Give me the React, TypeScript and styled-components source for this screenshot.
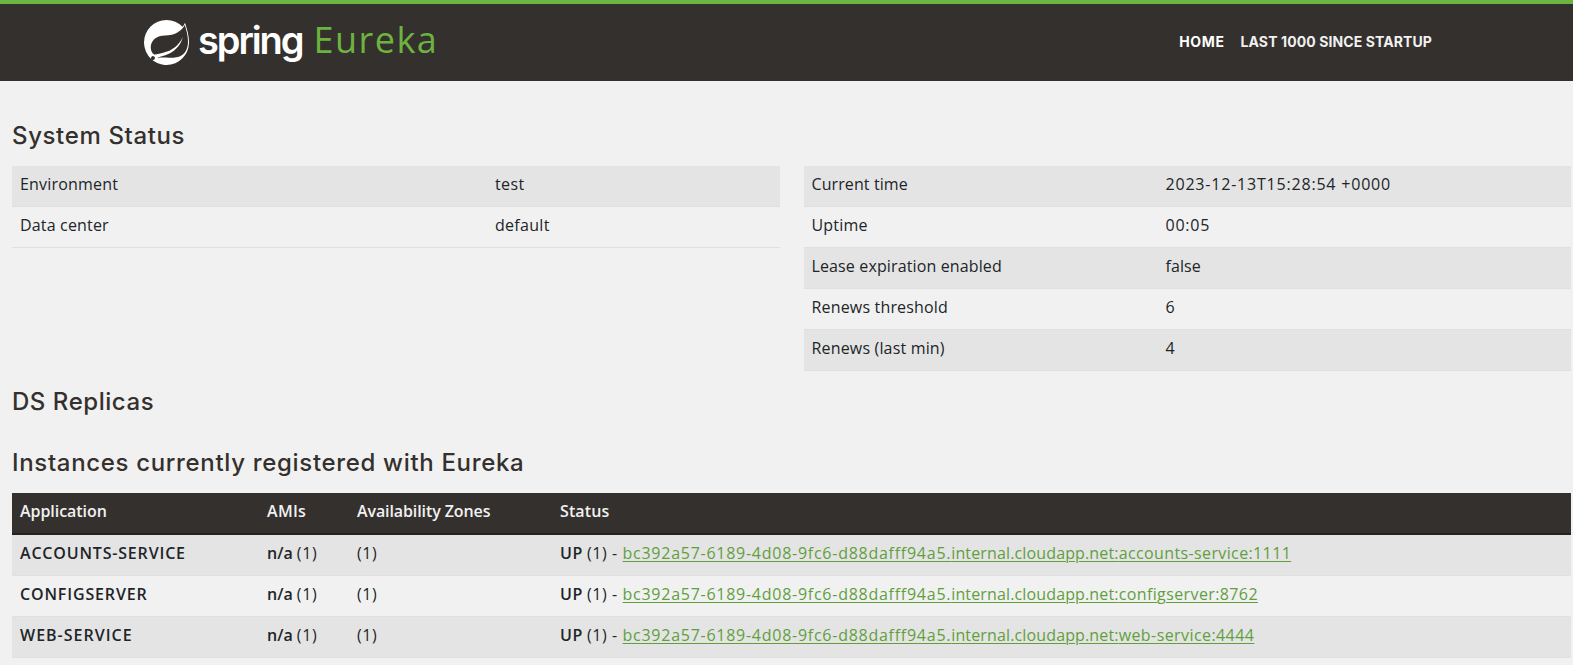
import React from "react";
import styled, { createGlobalStyle } from "styled-components";
import { SiSpring } from "react-icons/si";

const GlobalStyle = createGlobalStyle`
  *, *::before, *::after { box-sizing: border-box; }
  body {
    margin: 0;
    background: #f1f1f1;
    color: #212529;
    font-family: "Open Sans", "Noto Sans", sans-serif;
    font-size: 16px;
    line-height: 24px;
    overflow: hidden;
  }
`;

const Header = styled.header`
  display: flex;
  justify-content: space-between;
  align-items: center;
  height: 81px;
  padding: 0 141px 0 144px;
  border-top: 4px solid #6db33f;
  background: #34302d;
`;

const Brand = styled.a`
  display: flex;
  align-items: center;
  height: 100%;
  color: #fff;
`;

const SpringName = styled.span`
  margin-left: 9px;
  padding-bottom: 6px;
  font: 600 38px/48px Inter, sans-serif;
  letter-spacing: -2.1px;
`;

const ProductName = styled.span`
  margin-left: 11px;
  padding-bottom: 5px;
  color: #6db33f;
  font-size: 36px;
  line-height: 48px;
  letter-spacing: 1.5px;
`;

const Nav = styled.nav`
  display: flex;
  gap: 16px;
  padding-bottom: 2px;
`;

const NavLink = styled.a<{ $active?: boolean; $track: number }>`
  color: ${(p) => (p.$active ? "#fff" : "#f1f1f1")};
  font: 700 14px/24px Inter, sans-serif;
  letter-spacing: ${(p) => p.$track}px;
`;

const Main = styled.main`
  padding: 37px 2px 0 12px;
`;

const Heading = styled.h1<{ $track: number }>`
  margin: 0 0 12px;
  color: #34302d;
  font: 500 24px/36px Inter, sans-serif;
  letter-spacing: ${(p) => p.$track}px;
`;

const StatusGrid = styled.div`
  display: grid;
  grid-template-columns: 1fr 1fr;
  align-items: start;
  gap: 24px;
  margin-bottom: 13px;
`;

const Row = styled.div<{ $columns: string }>`
  display: grid;
  grid-template-columns: ${(p) => p.$columns};
  height: 41px;
  border-bottom: 1px solid #dee0e1;
  &:nth-child(odd) { background: #e4e4e4; }
`;

const Cell = styled.div`
  padding: 6px 8px 10px;
  white-space: nowrap;
`;

const Text = styled.span<{ $track: number }>`
  letter-spacing: ${(p) => p.$track}px;
`;

const Strong = styled.b<{ $track?: number }>`
  font-weight: 600;
  letter-spacing: ${(p) => p.$track ?? 0}px;
`;

const Instances = styled.section`
  margin-top: 25px;
`;

const HeadRow = styled.div<{ $columns: string }>`
  display: grid;
  grid-template-columns: ${(p) => p.$columns};
  height: 42px;
  border-bottom: 2px solid #222;
  background: #34302d;
  color: #f1f1f1;
`;

const InstanceLink = styled.a`
  color: #619f3d;
  text-decoration: underline;
  text-underline-offset: 2px;
  text-decoration-thickness: 1px;
`;

type Entry = [string, number, string, number];

const general: Entry[] = [
  ["Environment", 0.2, "test", 0.4],
  ["Data center", 0.17, "default", 0.3],
];

const runtime: Entry[] = [
  ["Current time", 0.1, "2023-12-13T15:28:54 +0000", 0.8],
  ["Uptime", 0.2, "00:05", 0.75],
  ["Lease expiration enabled", 0.13, "false", 0.1],
  ["Renews threshold", 0.17, "6", 0],
  ["Renews (last min)", 0.17, "4", 0],
];

const columns = "247px 90px 203px 1fr";

const headings: [string, number][] = [
  ["Application", -0.05],
  ["AMIs", 0.3],
  ["Availability Zones", -0.1],
  ["Status", 0.1],
];

const services: [string, number, string, number][] = [
  ["ACCOUNTS-SERVICE", 0.82, "accounts-service:1111", 0.38],
  ["CONFIGSERVER", 0.85, "configserver:8762", 0.39],
  ["WEB-SERVICE", 1, "web-service:4444", 0.42],
];

function StatusTable({ entries, columns }: { entries: Entry[]; columns: string }) {
  return (
    <div>
      {entries.map(([name, nameTrack, value, valueTrack]) => (
        <Row key={name} $columns={columns}>
          <Cell><Text $track={nameTrack}>{name}</Text></Cell>
          <Cell><Text $track={valueTrack}>{value}</Text></Cell>
        </Row>
      ))}
    </div>
  );
}

export default function App() {
  return (
    <>
      <GlobalStyle />
      <Header>
        <Brand>
          <SiSpring size={45} />
          <SpringName>spring</SpringName>
          <ProductName>Eureka</ProductName>
        </Brand>
        <Nav>
          <NavLink $active $track={0.6}>HOME</NavLink>
          <NavLink $track={0.1}>LAST 1000 SINCE STARTUP</NavLink>
        </Nav>
      </Header>
      <Main>
        <Heading $track={0.63}>System Status</Heading>
        <StatusGrid>
          <StatusTable entries={general} columns="475px 1fr" />
          <StatusTable entries={runtime} columns="354px 1fr" />
        </StatusGrid>
        <Heading as="h2" $track={0.55}>DS Replicas</Heading>
        <Instances>
          <Heading as="h2" $track={0.67}>Instances currently registered with Eureka</Heading>
          <HeadRow $columns={columns}>
            {headings.map(([label, track]) => (
              <Cell key={label}><Strong $track={track}>{label}</Strong></Cell>
            ))}
          </HeadRow>
          <div>
            {services.map(([name, nameTrack, instance, instanceTrack]) => (
              <Row key={name} $columns={columns}>
                <Cell><Strong $track={nameTrack}>{name}</Strong></Cell>
                <Cell><Strong>n/a</Strong> <Text $track={0.6}>(1)</Text></Cell>
                <Cell><Text $track={0.6}>(1)</Text></Cell>
                <Cell>
                  <Strong $track={0.5}>UP</Strong> <Text $track={0.6}>(1) - </Text>
                  <InstanceLink>
                    <Text $track={0.74}>bc392a57-6189-4d08-9fc6-d88dafff94a5.</Text>
                    <Text $track={0.14}>internal.cloudapp.net:</Text>
                    <Text $track={instanceTrack}>{instance}</Text>
                  </InstanceLink>
                </Cell>
              </Row>
            ))}
          </div>
        </Instances>
      </Main>
    </>
  );
}
